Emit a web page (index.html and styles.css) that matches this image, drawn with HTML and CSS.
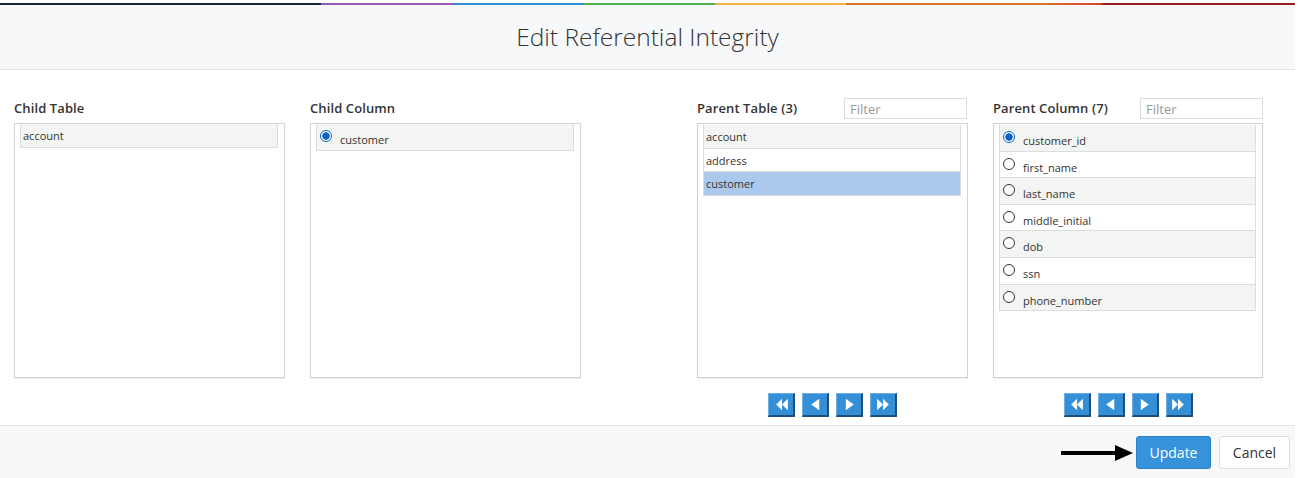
FILE: index.html
```html
<!DOCTYPE html>
<html>
<head>
<meta charset="utf-8">
<link rel="stylesheet" href="styles.css">
</head>
<body>
<div class="page">
  <div class="topbar"></div>
  <header class="header"><h1 class="title">Edit Referential Integrity</h1></header>
  <main class="body">
    <section class="col col-child-table">
      <div class="col-head"><span class="label">Child Table</span></div>
      <div class="box">
        <div class="item alt plain">account</div>
      </div>
    </section>
    <section class="col col-child-col">
      <div class="col-head"><span class="label">Child Column</span></div>
      <div class="box">
        <div class="item alt radio-item tall"><span class="radio on"></span><span class="txt">customer</span></div>
      </div>
    </section>
    <section class="col col-parent-table">
      <div class="col-head"><span class="label">Parent Table (3)</span><input class="filter" placeholder="Filter"></div>
      <div class="box box-padtop">
        <div class="item alt plain">account</div>
        <div class="item plain">address</div>
        <div class="item plain selected">customer</div>
      </div>
      <div class="navs">
        <span class="nav"><svg viewBox="0 0 16 14" width="17" height="15"><polygon points="8.5,1.5 3,7 8.5,12.5" fill="#fff"/><polygon points="14,1.5 8.5,7 14,12.5" fill="#fff"/></svg></span>
        <span class="nav"><svg viewBox="0 0 16 14" width="17" height="15"><polygon points="11.5,1.5 4,7 11.5,12.5" fill="#fff"/></svg></span>
        <span class="nav"><svg viewBox="0 0 16 14" width="17" height="15"><polygon points="4.5,1.5 12,7 4.5,12.5" fill="#fff"/></svg></span>
        <span class="nav"><svg viewBox="0 0 16 14" width="17" height="15"><polygon points="2,1.5 7.5,7 2,12.5" fill="#fff"/><polygon points="7.5,1.5 13,7 7.5,12.5" fill="#fff"/></svg></span>
      </div>
    </section>
    <section class="col col-parent-col">
      <div class="col-head"><span class="label">Parent Column (7)</span><input class="filter" placeholder="Filter"></div>
      <div class="box box-padtop">
        <div class="item alt radio-item"><span class="radio on"></span><span class="txt">customer_id</span></div>
        <div class="item radio-item"><span class="radio"></span><span class="txt">first_name</span></div>
        <div class="item alt radio-item"><span class="radio"></span><span class="txt">last_name</span></div>
        <div class="item radio-item"><span class="radio"></span><span class="txt">middle_initial</span></div>
        <div class="item alt radio-item"><span class="radio"></span><span class="txt">dob</span></div>
        <div class="item radio-item"><span class="radio"></span><span class="txt">ssn</span></div>
        <div class="item alt radio-item"><span class="radio"></span><span class="txt">phone_number</span></div>
      </div>
      <div class="navs">
        <span class="nav"><svg viewBox="0 0 16 14" width="17" height="15"><polygon points="8.5,1.5 3,7 8.5,12.5" fill="#fff"/><polygon points="14,1.5 8.5,7 14,12.5" fill="#fff"/></svg></span>
        <span class="nav"><svg viewBox="0 0 16 14" width="17" height="15"><polygon points="11.5,1.5 4,7 11.5,12.5" fill="#fff"/></svg></span>
        <span class="nav"><svg viewBox="0 0 16 14" width="17" height="15"><polygon points="4.5,1.5 12,7 4.5,12.5" fill="#fff"/></svg></span>
        <span class="nav"><svg viewBox="0 0 16 14" width="17" height="15"><polygon points="2,1.5 7.5,7 2,12.5" fill="#fff"/><polygon points="7.5,1.5 13,7 7.5,12.5" fill="#fff"/></svg></span>
      </div>
    </section>
  </main>
  <footer class="footer">
    <svg class="arrow" viewBox="0 0 72 18" width="72" height="18"><rect x="0" y="7" width="56" height="4" fill="#000"/><polygon points="54,1 72,9 54,17" fill="#000"/></svg>
    <button class="btn btn-primary">Update</button>
    <button class="btn btn-default">Cancel</button>
  </footer>
</div>
</body>
</html>
```
FILE: styles.css
```css
html, body {
  margin: 0;
  padding: 0;
  background: #fff;
}
body {
  font-family: "Open Sans", "Liberation Sans", sans-serif;
  color: #333;
}
.page {
  width: 1295px;
  height: 478px;
  padding-top: 3px;
  box-sizing: border-box;
  display: flex;
  flex-direction: column;
}
.topbar {
  height: 2px;
  background: linear-gradient(to right,
    #1c2533 0, #1c2533 321px,
    #9b59b6 321px, #9b59b6 454px,
    #2f8fd8 454px, #2f8fd8 584px,
    #4cae4c 584px, #4cae4c 715px,
    #f0b43c 715px, #f0b43c 846px,
    #d9742a 846px, #d9742a 1040px,
    #d8432f 1100px,
    #9b1c1c 1104px, #9b1c1c 100%);
}
.header {
  height: 64px;
  background: #f7f8fa;
  border-bottom: 1px solid #e3e4e6;
  display: flex;
  align-items: center;
  justify-content: center;
}
.title {
  margin: 0;
  font-weight: 300;
  font-size: 24.5px;
  color: #333;
  padding-bottom: 2px;
}
.body {
  flex: 1;
  display: flex;
  padding: 26px 0 0 14px;
}
.col {
  width: 271px;
  display: flex;
  flex-direction: column;
}
.col-child-col { margin-left: 25px; }
.col-parent-table { margin-left: 116px; }
.col-parent-col { margin-left: 25px; width: 270px; }
.col-head {
  height: 27px;
  display: flex;
  align-items: flex-start;
  justify-content: space-between;
}
.label {
  font-size: 13px;
  font-weight: 600;
  color: #333;
  line-height: 18px;
  padding-top: 3px;
  letter-spacing: 0.1px;
}
.filter {
  width: 123px;
  height: 21px;
  box-sizing: border-box;
  border: 1px solid #ddd;
  font-family: "Open Sans", "Liberation Sans", sans-serif;
  font-size: 13px;
  padding: 0 5px;
  margin: 2px 1px 0 0;
  outline: none;
}
.col-parent-col .filter { margin-right: 0; }
.filter::placeholder { color: #999; }
.box {
  height: 255px;
  box-sizing: border-box;
  border: 1px solid #d4d4d4;
  box-shadow: 0 1px 1px #eee;
  padding: 0 6px 0 5px;
}
.box-padtop { padding-top: 1px; }
.item {
  font-size: 11px;
  color: #333;
  border: 1px solid #dcdcdc;
  border-top: none;
  background: #fff;
}
.item.alt { background: #f2f5f2; }
.item.plain {
  height: 23.5px;
  line-height: 23px;
  padding-left: 2px;
  box-sizing: border-box;
}
.item.selected { background: #abc9ec; }
.radio-item {
  height: 26.6px;
  display: flex;
  align-items: flex-start;
  padding-left: 3px;
  box-sizing: border-box;
}
.radio-item.tall { height: 27px; }
.radio {
  width: 10px;
  height: 10px;
  border: 1px solid #333;
  border-radius: 50%;
  margin-top: 6px;
  flex: none;
  box-sizing: content-box;
  background: #fff;
}
.radio.on {
  border-color: #0a62c9;
  background: radial-gradient(circle, #0a62c9 0, #0a62c9 3.4px, #fff 4px);
}
.txt {
  margin-left: 8px;
  margin-top: 9px;
  line-height: 14px;
}
.navs {
  display: flex;
  justify-content: center;
  gap: 7px;
  margin-top: 15px;
}
.nav {
  width: 27px;
  height: 24px;
  background: #348fd6;
  border-right: 2px solid #1e4f7a;
  border-bottom: 2px solid #1e4f7a;
  border-top: 1px solid #6db0e6;
  border-left: 1px solid #6db0e6;
  display: flex;
  align-items: center;
  justify-content: center;
  box-sizing: border-box;
}
.footer {
  height: 53px;
  box-sizing: border-box;
  background: #f7f8fa;
  border-top: 1px solid #dfe1e4;
  display: flex;
  align-items: center;
  justify-content: flex-end;
  padding-right: 5px;
  padding-top: 1px;
}
.arrow {
  margin-right: 3px;
}
.btn {
  font-family: "Open Sans", "Liberation Sans", sans-serif;
  font-size: 14px;
  height: 33px;
  border-radius: 3px;
  padding: 0;
  margin: 0;
}
.btn-primary {
  width: 75px;
  background: #3592db;
  border: 1px solid #2a80c5;
  color: #fff;
}
.btn-default {
  width: 71px;
  margin-left: 8px;
  background: #fff;
  border: 1px solid #ddd;
  color: #333;
}
```
